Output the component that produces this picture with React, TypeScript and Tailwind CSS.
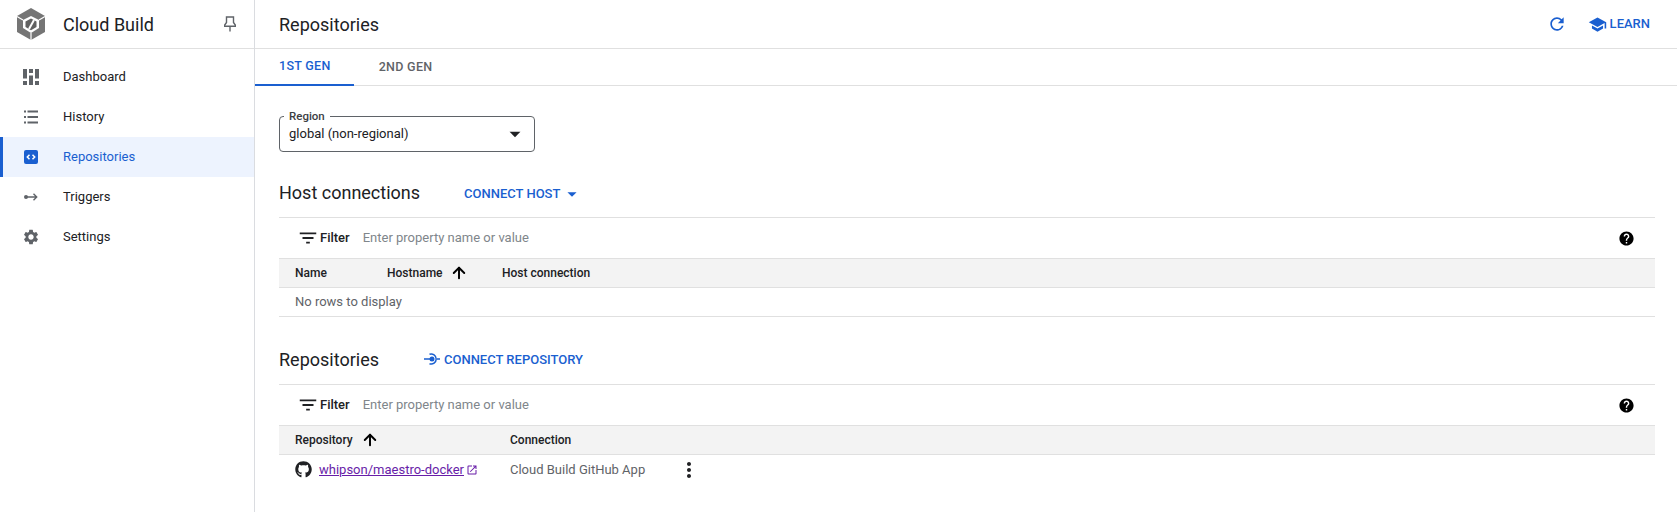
import { ArrowUp } from "lucide-react";
import { FaGithub } from "react-icons/fa";
import {
  MdFilterList,
  MdHelp,
  MdMoreVert,
  MdOpenInNew,
  MdRefresh,
  MdSchool,
  MdSettings,
  MdArrowDropDown,
} from "react-icons/md";

function CloudBuildLogo() {
  return (
    <svg width="30" height="32" viewBox="0 0 30 32">
      <path d="M15 0 29 8v16l-14 8-14-8V8z" fill="#757575" />
      <path d="M15 8 23 12v8l-8 5-8-5v-8z" fill="#fff" />
      <path d="M15 10.500 20.500 13.500V19L15 22.300 9.500 19V13.500z" fill="#616161" />
      <path d="M18 12 13 21" stroke="#fff" strokeWidth="2" />
      <path d="M15 25v7M7 12 1 8.500M23 12l6-3.500" stroke="#fff" strokeWidth="1.200" />
    </svg>
  );
}

function PinIcon() {
  return (
    <svg width="12" height="16" viewBox="0 0 12 16" fill="none" stroke="#5f6368" strokeWidth="1.400">
      <path d="M2.500 1h7v5.500l1.800 2.500v1.300H.7V9l1.800-2.500z" />
      <path d="M6 10.500V15.500" />
    </svg>
  );
}

function DashboardIcon() {
  return (
    <svg width="16" height="16" viewBox="0 0 16 16" fill="#5f6368">
      <rect x="0" y="0" width="4" height="9.500" />
      <rect x="0" y="12" width="4" height="4" />
      <rect x="6" y="0" width="4" height="4" />
      <rect x="6" y="6.500" width="4" height="9.500" />
      <rect x="12" y="0" width="4" height="9.500" />
      <rect x="12" y="12" width="4" height="4" />
    </svg>
  );
}

function HistoryIcon() {
  return (
    <svg width="14" height="14" viewBox="0 0 14 14" fill="#5f6368">
      <rect x="0" y="0.500" width="2" height="2" />
      <rect x="3.500" y="0.500" width="10.500" height="2" />
      <rect x="0" y="6" width="2" height="2" />
      <rect x="3.500" y="6" width="10.500" height="2" />
      <rect x="0" y="11.500" width="2" height="2" />
      <rect x="3.500" y="11.500" width="10.500" height="2" />
    </svg>
  );
}

function RepoIcon() {
  return (
    <svg width="14" height="14" viewBox="0 0 14 14">
      <rect width="14" height="14" rx="2" fill="#1a5fd0" />
      <path d="M5.500 4.800 3.300 7l2.200 2.200M8.500 4.800 10.700 7 8.500 9.200" fill="none" stroke="#fff" strokeWidth="1.500" />
    </svg>
  );
}

function TriggerIcon() {
  return (
    <svg width="14" height="10" viewBox="0 0 14 10">
      <circle cx="2" cy="5" r="2" fill="#5f6368" />
      <path d="M3 5h9.500M9.500 1.800 12.700 5 9.500 8.200" fill="none" stroke="#5f6368" strokeWidth="1.400" />
    </svg>
  );
}

function ConnectRepoIcon() {
  return (
    <svg width="16" height="14" viewBox="0 0 16 14">
      <circle cx="8" cy="7" r="2.500" fill="#1a5fd0" />
      <path
        d="M0 7h8M13 7h3M5.500 2.300A5 5 0 1 1 5.500 11.700"
        fill="none"
        stroke="#1a5fd0"
        strokeWidth="1.500"
      />
    </svg>
  );
}

const NAV_ITEMS = [
  { label: "Dashboard", icon: <DashboardIcon /> },
  { label: "History", icon: <HistoryIcon /> },
  { label: "Repositories", icon: <RepoIcon />, active: true },
  { label: "Triggers", icon: <TriggerIcon /> },
  { label: "Settings", icon: <MdSettings size={18} color="#5f6368" /> },
];

function FilterBar() {
  return (
    <div className="flex h-[41px] items-center border-t border-[#e0e0e0] pl-[18px] pr-[20px]">
      <MdFilterList size={22} color="#202124" />
      <span className="ml-[1px] text-[13px] font-medium text-[#202124]">Filter</span>
      <span className="ml-[13px] text-[13px] text-[#80868b]">Enter property name or value</span>
      <MdHelp size={17} color="#000" className="ml-auto" />
    </div>
  );
}

function SortArrow() {
  return <ArrowUp size={18} strokeWidth={2.6} color="#000" />;
}

export default function App() {
  return (
    <div className="flex h-[512px] w-[1677px] overflow-hidden bg-white font-['Roboto',sans-serif] text-[#202124]">
      {/* Sidebar */}
      <aside className="flex w-[255px] shrink-0 flex-col border-r border-[#dadce0]">
        <div className="flex h-[49px] items-center border-b border-[#e0e0e0] pl-[16px] pr-[18px]">
          <CloudBuildLogo />
          <span className="ml-[17px] text-[18px]">Cloud Build</span>
          <span className="ml-auto">
            <PinIcon />
          </span>
        </div>
        <nav className="mt-[8px] flex flex-col">
          {NAV_ITEMS.map((item) => (
            <div
              key={item.label}
              className={`flex h-[40px] items-center text-[13px] ${
                item.active ? "border-l-[3px] border-[#1a5fd0] bg-[#e8f0fe]/80 text-[#1a5fd0]" : "pl-[3px]"
              }`}
            >
              <span className="flex w-[60px] justify-center pr-[4px]">{item.icon}</span>
              {item.label}
            </div>
          ))}
        </nav>
      </aside>

      {/* Main */}
      <main className="flex min-w-0 flex-1 flex-col">
        <header className="flex h-[49px] shrink-0 items-center border-b border-[#e0e0e0] pl-[24px] pr-[27px]">
          <h1 className="text-[18px]">Repositories</h1>
          <MdRefresh size={20} color="#1a5fd0" className="ml-auto" />
          <MdSchool size={19} color="#1a5fd0" className="ml-[21px]" />
          <span className="ml-[3px] text-[13px] font-medium text-[#1a5fd0]">LEARN</span>
        </header>

        <div className="flex h-[37px] shrink-0 border-b border-[#e0e0e0] text-[12.500px] font-medium tracking-[0.3px]">
          <div className="-mb-px flex items-center border-b-2 border-[#1a5fd0] pl-[24px] pr-[23px] text-[#1a5fd0]">1ST GEN</div>
          <div className="flex items-center pl-[25px] pr-[24px] text-[#5f6368]">2ND GEN</div>
        </div>

        <div className="pl-[24px] pr-[22px]">
          {/* Region */}
          <div className="relative mt-[30px] flex h-[36px] w-[256px] items-center rounded border border-[#5f6368] pl-[9px] pr-[6px] text-[13px]">
            <span className="absolute -top-[7px] left-[4px] bg-white px-[5px] text-[11.500px] font-medium leading-[13px] text-[#3c4043]">
              Region
            </span>
            <span>global (non-regional)</span>
            <MdArrowDropDown size={26} color="#202124" className="ml-auto" />
          </div>

          {/* Host connections */}
          <div className="mt-[26px] flex h-[28px] items-center">
            <h2 className="text-[18px]">Host connections</h2>
            <span className="ml-[44px] mt-[3px] text-[13px] font-medium text-[#1a5fd0]">CONNECT HOST</span>
            <MdArrowDropDown size={22} color="#1a5fd0" className="ml-[1px] mt-[3px]" />
          </div>
          <div className="mt-[11px]">
            <FilterBar />
            <div className="flex h-[30px] items-center border-y border-[#e0e0e0] bg-[#f3f3f3] pl-[16px] text-[12px] font-medium text-[#202124]">
              <span className="w-[92px]">Name</span>
              <span className="flex w-[115px] items-center gap-[7px]">
                Hostname <SortArrow />
              </span>
              <span>Host connection</span>
            </div>
            <div className="flex h-[29px] items-center border-b border-[#e0e0e0] pl-[16px] text-[13px] text-[#5f6368]">
              No rows to display
            </div>
          </div>

          {/* Repositories */}
          <div className="mt-[28px] flex h-[28px] items-center">
            <h2 className="text-[18px]">Repositories</h2>
            <span className="ml-[45px]">
              <ConnectRepoIcon />
            </span>
            <span className="ml-[4px] mt-[1px] text-[13px] font-medium text-[#1a5fd0]">CONNECT REPOSITORY</span>
          </div>
          <div className="mt-[11px]">
            <FilterBar />
            <div className="flex h-[30px] items-center border-y border-[#e0e0e0] bg-[#f3f3f3] pl-[16px] text-[12px] font-medium text-[#202124]">
              <span className="flex w-[215px] items-center gap-[8px]">
                Repository <SortArrow />
              </span>
              <span>Connection</span>
            </div>
            <div className="flex h-[29px] items-center pl-[16px] text-[13px] text-[#5f6368]">
              <FaGithub size={17} color="#202124" />
              <a className="ml-[7px] text-[#681da8] underline">whipson/maestro-docker</a>
              <MdOpenInNew size={12} color="#681da8" className="ml-[2px]" />
              <span className="ml-[32px]">Cloud Build GitHub App</span>
              <MdMoreVert size={24} color="#202124" className="ml-[32px]" />
            </div>
          </div>
        </div>
      </main>
    </div>
  );
}
